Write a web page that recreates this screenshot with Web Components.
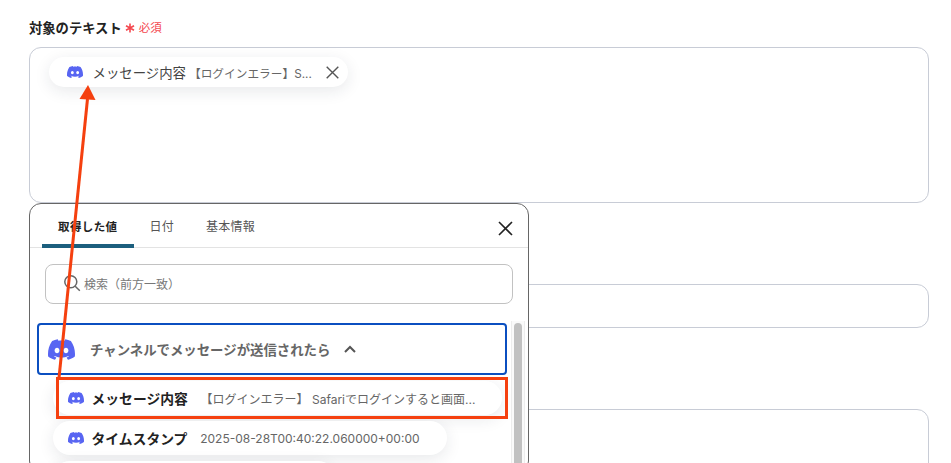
<!DOCTYPE html>
<html lang="ja">
<head>
<meta charset="utf-8">
<title>対象のテキスト</title>
<style>
  html, body { margin: 0; height: 463px; overflow: hidden; background: #fff; }
  body { font-family: Inter, "Noto Sans CJK JP", sans-serif; color: #222; }
</style>
</head>
<body>
<template id="discord-tpl">
  <style>
    :host { display: inline-flex; flex: none; width: var(--size, 16px); color: #5865f2; }
    svg { display: block; width: 100%; height: auto; fill: currentColor; }
  </style>
  <svg viewBox="0 0 24 24"><path d="M20.317 4.3698a19.7913 19.7913 0 00-4.8851-1.5152.0741.0741 0 00-.0785.0371c-.211.3753-.4447.8648-.6083 1.2495-1.8447-.2762-3.68-.2762-5.4868 0-.1636-.3933-.4058-.8742-.6177-1.2495a.077.077 0 00-.0785-.037 19.7363 19.7363 0 00-4.8852 1.515.0699.0699 0 00-.0321.0277C.5334 9.0458-.319 13.5799.0992 18.0578a.0824.0824 0 00.0312.0561c2.0528 1.5076 4.0413 2.4228 5.9929 3.0294a.0777.0777 0 00.0842-.0276c.4616-.6304.8731-1.2952 1.226-1.9942a.076.076 0 00-.0416-.1057c-.6528-.2476-1.2743-.5495-1.8722-.8923a.077.077 0 01-.0076-.1277c.1258-.0943.2517-.1923.3718-.2914a.0743.0743 0 01.0776-.0105c3.9278 1.7933 8.18 1.7933 12.0614 0a.0739.0739 0 01.0785.0095c.1202.099.246.1981.3728.2924a.077.077 0 01-.0066.1276 12.2986 12.2986 0 01-1.873.8914.0766.0766 0 00-.0407.1067c.3604.698.7719 1.3628 1.225 1.9932a.076.076 0 00.0842.0286c1.961-.6067 3.9495-1.5219 6.0023-3.0294a.077.077 0 00.0313-.0552c.5004-5.177-.8382-9.6739-3.5485-13.6604a.061.061 0 00-.0312-.0286zM8.02 15.3312c-1.1825 0-2.1569-1.0857-2.1569-2.419 0-1.3332.9555-2.4189 2.157-2.4189 1.2108 0 2.1757 1.0952 2.1568 2.419 0 1.3332-.9555 2.4189-2.1569 2.4189zm7.9748 0c-1.1825 0-2.1569-1.0857-2.1569-2.419 0-1.3332.9554-2.4189 2.1569-2.4189 1.2108 0 2.1757 1.0952 2.1568 2.419 0 1.3332-.946 2.4189-2.1568 2.4189Z"/></svg>
</template>

<template id="field-tpl">
  <style>
    :host { display: block; }
    .label { display: flex; align-items: center; gap: 3px; height: 20px; margin-bottom: 10px; font-size: 13.3px; font-weight: 700; color: #222; }
    .req { display: none; align-items: center; gap: 4px; font-size: 11.5px; font-weight: 400; color: #f4484f; }
    :host([required]) .req { display: inline-flex; }
    .star { width: 10px; height: 10px; margin-top: 2px; }
    .box { box-sizing: border-box; height: var(--box-h, 44px); padding: 9px 19px; border: 1px solid #c8ccd6; border-radius: 12px; background: #fff; }
  </style>
  <div class="label"><slot name="label"></slot><span class="req"><svg class="star" viewBox="0 0 10 10" stroke="#f4484f" stroke-width="1.6"><path d="M5 .5v9M1 2.7l8 4.6M9 2.7L1 7.3"/></svg>必須</span></div>
  <div class="box"><slot></slot></div>
</template>

<template id="chip-tpl">
  <style>
    :host { display: flex; width: fit-content; }
    .chip { display: flex; align-items: center; box-sizing: border-box; height: var(--chip-h, 34px); width: var(--chip-w, auto); padding: var(--chip-pad, 0 27px 0 15px); border-radius: 20px; background: #fff; box-shadow: 0 4px 16px rgba(30, 35, 60, .1); white-space: nowrap; }
    .name { margin-left: var(--name-gap, 7.5px); font-size: var(--name-size, 13.8px); color: var(--name-color, #222); font-weight: var(--name-weight, 700); }
    .value { margin-left: var(--value-gap, 12.8px); font-size: var(--value-size, 12px); color: #666; }
    .close { display: none; margin-left: 14px; width: 13px; height: 13px; }
    :host([closable]) .close { display: block; }
  </style>
  <div class="chip">
    <x-discord></x-discord>
    <span class="name"><slot name="name"></slot></span>
    <span class="value"><slot name="value"></slot></span>
    <svg class="close" viewBox="0 0 13 13" fill="none" stroke="#555" stroke-width="1.4"><path d="M.7.7l11.6 11.6M12.3.7L.7 12.3"/></svg>
  </div>
</template>

<template id="tabs-tpl">
  <style>
    :host { display: flex; height: 43px; padding: 0 3px; border-bottom: 1px solid #e3e3e3; align-items: stretch; position: relative; }
    .tab { display: flex; align-items: center; padding: 0 16px; font-size: 12px; letter-spacing: .25px; color: #555; height: 43px; box-sizing: border-box; }
    .on { color: #222; font-size: 11.5px; letter-spacing: .4px; font-weight: 700; height: 44px; border-bottom: 4px solid #1c5f7e; border-radius: 4px 4px 0 0; padding-top: 4px; }
    .first { margin-left: 9px; }
    .close { position: absolute; right: 15px; top: 17px; width: 15px; height: 15px; }
  </style>
  <div class="tab on first">取得した値</div>
  <div class="tab">日付</div>
  <div class="tab">基本情報</div>
  <svg class="close" viewBox="0 0 15 15" fill="none" stroke="#222" stroke-width="1.6"><path d="M1 1l13 13M14 1L1 14"/></svg>
</template>

<template id="search-tpl">
  <style>
    :host { display: flex; align-items: center; gap: 3px; box-sizing: border-box; height: 40px; padding: 0 0 2px 17px; border: 1px solid #c2c2c2; border-radius: 8px; background: #fff; font-size: 12px; color: #777; }
    svg { width: 18px; height: 18px; flex: none; }
  </style>
  <svg viewBox="0 0 18 18" fill="none" stroke="#666" stroke-width="1.5"><circle cx="7.8" cy="7.8" r="6"/><path d="M12.2 12.2l4.6 4.6"/></svg>
  <span>検索（前方一致）</span>
</template>

<template id="group-tpl">
  <style>
    :host { display: flex; align-items: center; box-sizing: border-box; height: 52px; padding-left: 9px; border: 2px solid #0b4fc0; border-radius: 4px; background: #fff; --size: 27px; }
    .title { margin-left: 15px; font-size: 13.4px; font-weight: 700; color: #666; }
    svg { margin-left: 14px; width: 12px; height: 8px; }
  </style>
  <x-discord></x-discord>
  <span class="title"><slot></slot></span>
  <svg viewBox="0 0 12 8" fill="none" stroke="#555" stroke-width="2"><path d="M1 7l5-5 5 5"/></svg>
</template>

<template id="popup-tpl">
  <style>
    :host { position: absolute; left: 29px; top: 203px; width: 500px; height: 270px; box-sizing: border-box; border: 1px solid #666; border-radius: 12px; background: #fff; display: block; }
    .search { padding: 16px 15px 19px 15px; }
    .body { display: flex; gap: 4px; padding-left: 7px; padding-right: 3px; }
    .list { flex: 1; min-width: 0; display: flex; flex-direction: column; gap: 6px; }
    .rows { display: flex; flex-direction: column; gap: 6px; padding-left: 16px; }
    .track { box-sizing: border-box; width: 14px; flex: none; margin-top: -2px; border-left: 1px solid #ededed; border-right: 1px solid #ededed; background: #fafafa; display: flex; justify-content: center; padding-top: 2px; }
    .thumb { width: 8px; height: 200px; border-radius: 4px; background: #c1c1c1; }
  </style>
  <x-tabs></x-tabs>
  <div class="search"><x-search></x-search></div>
  <div class="body">
    <div class="list">
      <x-group>チャンネルでメッセージが送信されたら</x-group>
      <div class="rows"><slot></slot></div>
    </div>
    <div class="track"><div class="thumb"></div></div>
  </div>
</template>

<template id="note-tpl">
  <style>
    :host { position: absolute; inset: 0; display: block; pointer-events: none; }
    svg { width: 100%; height: 100%; display: block; }
  </style>
  <svg viewBox="0 0 951 463">
    <rect x="57.5" y="378.5" width="449" height="39" fill="none" stroke="#f5400f" stroke-width="3"/>
    <path d="M59 378L87.5 99" fill="none" stroke="#f5400f" stroke-width="3"/>
    <path d="M88 85L95.5 100L79.5 99Z" fill="#f5400f"/>
  </svg>
</template>

<main-page>
  <x-field required style="--box-h:156px">
    <span slot="label">対象のテキスト</span>
    <x-chip closable style="--chip-h:30px;--chip-pad:0 9px 0 18px;--name-weight:400;--name-color:#444;--name-size:13.4px;--name-gap:9.5px;--value-gap:3px;--value-size:11.7px">
      <span slot="name">メッセージ内容</span>
      <span slot="value">【ログインエラー】S...</span>
    </x-chip>
  </x-field>
  <x-field><span slot="label">&nbsp;</span></x-field>
  <x-field style="--box-h:80px"><span slot="label">&nbsp;</span></x-field>
  <x-popup>
    <x-chip><span slot="name">メッセージ内容</span><span slot="value">【ログインエラー】 Safariでログインすると画面...</span></x-chip>
    <x-chip><span slot="name">タイムスタンプ</span><span slot="value">2025-08-28T00:40:22.060000+00:00</span></x-chip>
    <x-chip style="--chip-w:282px"><span slot="name"></span><span slot="value"></span></x-chip>
  </x-popup>
  <x-note></x-note>
</main-page>

<script>
  class Base extends HTMLElement {
    constructor() {
      super();
      const tpl = document.getElementById(this.constructor.tpl);
      this.attachShadow({ mode: 'open' }).appendChild(tpl.content.cloneNode(true));
    }
  }
  const define = (name, tpl) => customElements.define(name, class extends Base { static tpl = tpl; });

  define('x-discord', 'discord-tpl');
  define('x-field', 'field-tpl');
  define('x-chip', 'chip-tpl');
  define('x-tabs', 'tabs-tpl');
  define('x-search', 'search-tpl');
  define('x-group', 'group-tpl');
  define('x-popup', 'popup-tpl');
  define('x-note', 'note-tpl');

  class MainPage extends HTMLElement {
    constructor() {
      super();
      this.attachShadow({ mode: 'open' }).innerHTML = `
        <style>
          :host { display: flex; flex-direction: column; gap: 51px; position: relative; box-sizing: border-box; height: 463px; overflow: hidden; padding: 17px 22px 0 29px; }
        </style>
        <slot></slot>`;
    }
  }
  customElements.define('main-page', MainPage);
</script>
</body>
</html>
